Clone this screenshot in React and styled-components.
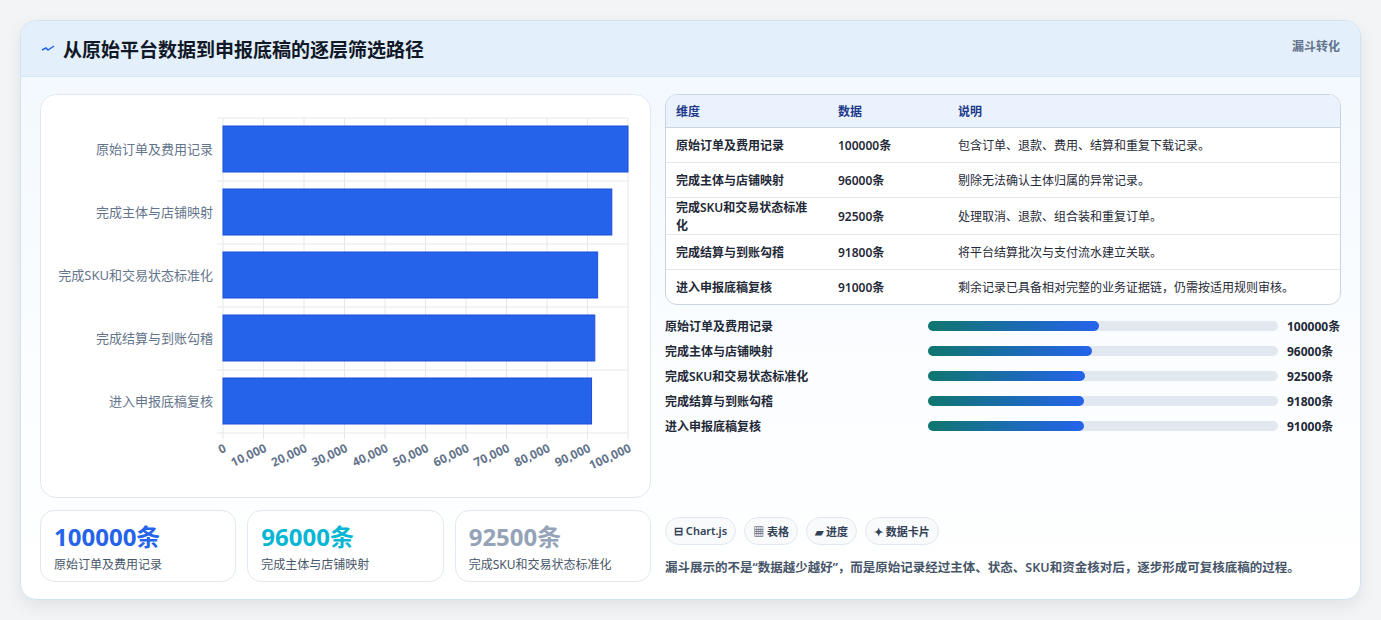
import React from 'react';
import styled, { createGlobalStyle } from 'styled-components';

const Global = createGlobalStyle`
  body { margin: 0; background: #f3f4f6; font-family: "Noto Sans", "Noto Sans CJK SC", sans-serif; }
`;

const rows = [
  { name: '原始订单及费用记录', v: 100000, note: '包含订单、退款、费用、结算和重复下载记录。', pct: 48.9 },
  { name: '完成主体与店铺映射', v: 96000, note: '剔除无法确认主体归属的异常记录。', pct: 46.9 },
  { name: '完成SKU和交易状态标准化', v: 92500, note: '处理取消、退款、组合装和重复订单。', pct: 44.9 },
  { name: '完成结算与到账勾稽', v: 91800, note: '将平台结算批次与支付流水建立关联。', pct: 44.6 },
  { name: '进入申报底稿复核', v: 91000, note: '剩余记录已具备相对完整的业务证据链，仍需按适用规则审核。', pct: 44.5 },
];

const Page = styled.div`
  padding: 20px 20px 22px 20px;
`;
const Card = styled.div`
  border: 1px solid #cfe3f1;
  border-radius: 16px;
  background: linear-gradient(180deg, #f1f8fe 0%, #fbfdff 60%, #ffffff 100%);
  box-shadow: 0 6px 16px rgba(15, 23, 42, 0.08);
  overflow: hidden;
`;
const Header = styled.div`
  height: 55px;
  background: #e3f0fc;
  border-bottom: 1px solid #d6e6f4;
  display: flex;
  align-items: center;
  justify-content: space-between;
  padding: 0 20px;
`;
const Title = styled.h2`
  margin: 0;
  font-size: 19px;
  font-weight: 700;
  color: #111827;
  display: flex;
  align-items: center;
  gap: 8px;
`;
const Badge = styled.span`
  font-size: 12px;
  font-weight: 700;
  color: #64748b;
  align-self: flex-start;
  margin-top: 16px;
`;
const Body = styled.div`
  display: grid;
  grid-template-columns: 611px 676px;
  gap: 14px;
  padding: 17px 19px 17px 19px;
`;
const Col = styled.div`
  display: flex;
  flex-direction: column;
`;
const ChartBox = styled.div`
  height: 402px;
  background: #fff;
  border: 1px solid #e2e8f0;
  border-radius: 16px;
`;
const Stats = styled.div`
  display: grid;
  grid-template-columns: repeat(3, 1fr);
  gap: 11px;
  margin-top: 12px;
`;
const Stat = styled.div`
  height: 72px;
  box-sizing: border-box;
  border: 1px solid #e2e8f0;
  border-radius: 14px;
  background: #fff;
  padding: 10px 13px;
`;
const StatNum = styled.div`
  font-size: 24px;
  font-weight: 700;
  line-height: 32px;
  color: ${p => p.c};
`;
const StatLabel = styled.div`
  font-size: 12px;
  color: #475569;
  margin-top: 2px;
`;
const Table = styled.table`
  width: 100%;
  border-collapse: separate;
  border-spacing: 0;
  border: 1px solid #cbd5e1;
  border-radius: 12px;
  overflow: hidden;
  font-size: 12px;
  background: #fff;
`;
const Th = styled.th`
  text-align: left;
  height: 32px;
  padding: 0 10px;
  background: #eaf3fd;
  color: #1e3a8a;
  font-weight: 700;
  border-bottom: 1px solid #cbd5e1;
  width: ${p => p.w || 'auto'};
`;
const Td = styled.td`
  height: 34px;
  padding: 0 10px;
  color: #1f2937;
  font-weight: ${p => (p.b ? 600 : 400)};
  border-top: ${p => (p.first ? 'none' : '1px solid #e2e8f0')};
`;
const Progress = styled.div`
  display: flex;
  flex-direction: column;
  gap: 7px;
  margin-top: 12px;
`;
const PRow = styled.div`
  display: grid;
  grid-template-columns: 254px 350px 1fr;
  gap: 9px;
  align-items: center;
  font-size: 12px;
  font-weight: 600;
  color: #1f2937;
  height: 18px;
`;
const Track = styled.div`
  height: 10px;
  border-radius: 5px;
  background: #e2e8f0;
`;
const Fill = styled.div`
  height: 100%;
  border-radius: 5px;
  background: linear-gradient(90deg, #0f766e, #2563eb);
`;
const Chips = styled.div`
  display: flex;
  gap: 8px;
  margin-top: auto;
`;
const Chip = styled.span`
  font-size: 11px;
  font-weight: 600;
  color: #334155;
  border: 1px solid #e2e8f0;
  background: #f8fafc;
  border-radius: 14px;
  padding: 5px 8px;
`;
const Note = styled.p`
  margin: 12px 0 6px;
  font-size: 12.5px;
  font-weight: 600;
  color: #475569;
`;

function Chart() {
  const x0 = 182, x1 = 587, top = 23, rowH = 63;
  const sx = v => x0 + (v / 100000) * (x1 - x0);
  const ticks = [0, 10000, 20000, 30000, 40000, 50000, 60000, 70000, 80000, 90000, 100000];
  return (
    <svg width="611" height="402" style={{ display: 'block' }}>
      {ticks.map(t => (
        <line key={t} x1={sx(t)} x2={sx(t)} y1={top} y2={top + rowH * 5 + 6} stroke="#e5e7eb" />
      ))}
      {[0, 1, 2, 3, 4, 5].map(i => (
        <line key={i} x1={x0 - 6} x2={x1} y1={top + i * rowH} y2={top + i * rowH} stroke="#e5e7eb" />
      ))}
      {rows.map((r, i) => {
        const y = top + i * rowH + 8;
        return (
          <g key={r.name}>
            <rect x={x0} y={y} width={sx(r.v) - x0} height={46} fill="#2563eb" stroke="#1d4ed8" />
            <text x={x0 - 10} y={y + 28} textAnchor="end" fontSize="13" fill="#64748b">{r.name}</text>
          </g>
        );
      })}
      {ticks.map(t => (
        <text key={t} transform={`translate(${sx(t) + 4} ${top + rowH * 5 + 18}) rotate(-25)`} textAnchor="end"
          fontSize="12" fontWeight="700" fill="#64748b">{t.toLocaleString('en-US')}</text>
      ))}
    </svg>
  );
}

export default function App() {
  return (
    <Page>
      <Global />
      <Card>
        <Header>
          <Title>
            <svg width="14" height="10" viewBox="0 0 14 10"><path d="M1 6 L5 4 L7 6 L13 2" stroke="#2563eb" strokeWidth="1.5" fill="none" /></svg>
            从原始平台数据到申报底稿的逐层筛选路径
          </Title>
          <Badge>漏斗转化</Badge>
        </Header>
        <Body>
          <Col>
            <ChartBox><Chart /></ChartBox>
            <Stats>
              <Stat><StatNum c="#2563eb">100000条</StatNum><StatLabel>原始订单及费用记录</StatLabel></Stat>
              <Stat><StatNum c="#06b6d4">96000条</StatNum><StatLabel>完成主体与店铺映射</StatLabel></Stat>
              <Stat><StatNum c="#94a3b8">92500条</StatNum><StatLabel>完成SKU和交易状态标准化</StatLabel></Stat>
            </Stats>
          </Col>
          <Col>
            <Table>
              <thead>
                <tr><Th w="142px">维度</Th><Th w="100px">数据</Th><Th>说明</Th></tr>
              </thead>
              <tbody>
                {rows.map((r, i) => (
                  <tr key={r.name}>
                    <Td b first={i === 0}>{r.name}</Td>
                    <Td b first={i === 0}>{r.v}条</Td>
                    <Td first={i === 0}>{r.note}</Td>
                  </tr>
                ))}
              </tbody>
            </Table>
            <Progress>
              {rows.map(r => (
                <PRow key={r.name}>
                  <span>{r.name}</span>
                  <Track><Fill style={{ width: `${r.pct}%` }} /></Track>
                  <span style={{ fontWeight: 700 }}>{r.v}条</span>
                </PRow>
              ))}
            </Progress>
            <Chips>
              <Chip>⊟ Chart.js</Chip>
              <Chip>▦ 表格</Chip>
              <Chip>▰ 进度</Chip>
              <Chip>✦ 数据卡片</Chip>
            </Chips>
            <Note>漏斗展示的不是“数据越少越好”，而是原始记录经过主体、状态、SKU和资金核对后，逐步形成可复核底稿的过程。</Note>
          </Col>
        </Body>
      </Card>
    </Page>
  );
}
